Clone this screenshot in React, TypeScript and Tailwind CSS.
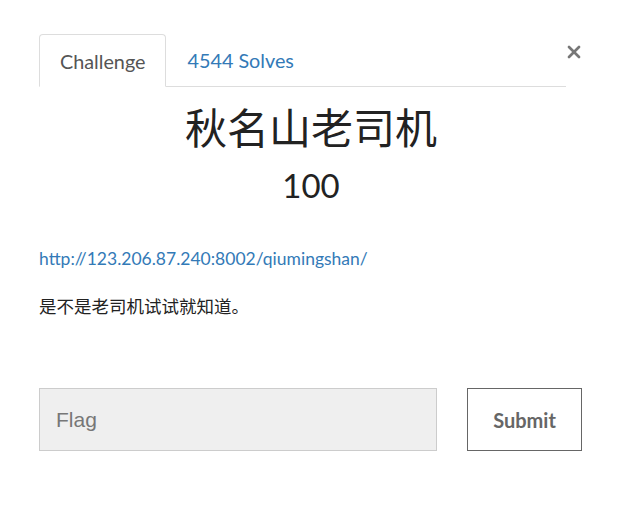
import { X } from "lucide-react";

const App = () => {
  return (
    <div className="w-[621px] h-[510px] bg-white px-[39px] pt-[34px] font-['Lato',sans-serif] text-[#333]">
      <div className="relative">
        <ul className="flex w-[527px] border-b border-[#ddd] text-[19.8px]">
          <li className="-mb-px rounded-t-[4px] border border-[#ddd] border-b-white bg-white">
            <span className="block h-[51px] px-[20px] pt-[12px] text-[#555]">Challenge</span>
          </li>
          <li>
            <span className="block h-[50px] px-[21px] pt-[12px] text-[#337ab7]">4544 Solves</span>
          </li>
        </ul>
        <button
          type="button"
          className="absolute right-[-2px] top-[8px] text-[#777]"
          aria-label="Close"
        >
          <X size={20} strokeWidth={3.2} />
        </button>
      </div>

      <div className="pl-px text-center">
        <h1 className="mt-[15px] font-['Lato','Noto_Sans_CJK_SC',sans-serif] text-[42px] leading-[52px] text-[#222]">
          秋名山老司机
        </h1>
        <h2 className="mt-[11px] text-[33px] leading-[40px] text-[#222]">100</h2>
      </div>

      <div className="mt-[41px] text-[17.5px]">
        <a href="#" className="block leading-[26px] text-[#337ab7]">
          http://123.206.87.240:8002/qiumingshan/
        </a>
        <p className="mt-[22px] font-['Lato','Noto_Sans_CJK_SC',sans-serif] leading-[26px] text-[#222]">
          是不是老司机试试就知道。
        </p>
      </div>

      <form className="mt-[68px] flex gap-[30px]">
        <input
          type="text"
          placeholder="Flag"
          className="h-[63px] w-[398px] border border-[#ccc] bg-[#efefef] px-[16px] font-['Liberation_Sans',sans-serif] text-[21px] text-[#555] placeholder:text-[#777]"
        />
        <button
          type="button"
          className="h-[63px] w-[115px] border border-[#666] bg-white text-[20px] font-bold text-[#666]"
        >
          Submit
        </button>
      </form>
    </div>
  );
};

export default App;
